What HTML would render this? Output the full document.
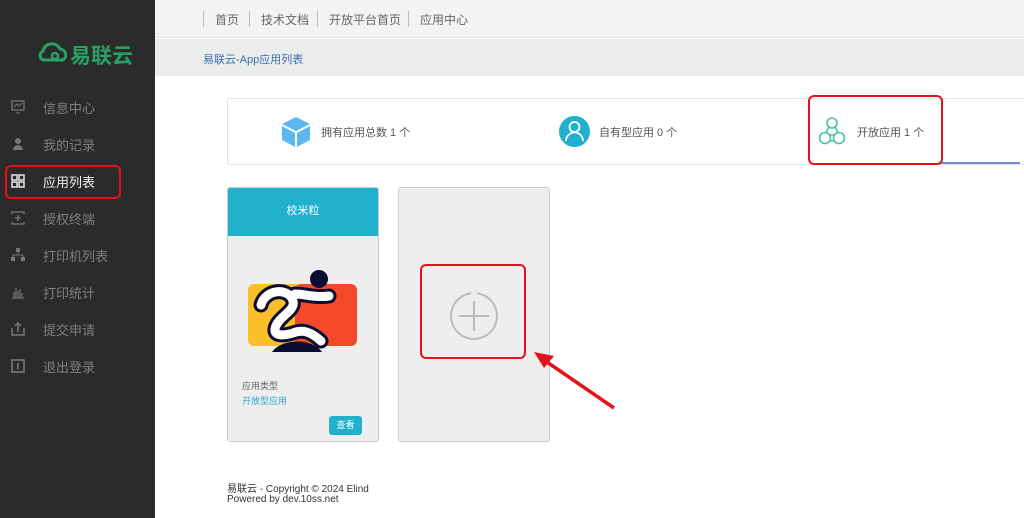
<!DOCTYPE html>
<html><head><meta charset="utf-8"><style>
*{margin:0;padding:0;box-sizing:border-box}
body{width:1024px;height:518px;overflow:hidden;background:#fff;font-family:"Liberation Sans","Noto Sans CJK SC",sans-serif;position:relative}
.abs{position:absolute}
#side{left:0;top:0;width:155px;height:518px;background:#2b2b2b}
.mi{position:absolute;left:43px;font-size:13px;color:#7f7f7f}
.ic{position:absolute;left:11px;width:14px;height:14px}
#top{left:155px;top:0;width:869px;height:38px;background:#f2f3f3;border-bottom:1px solid #e2e2e2}
#crumb{left:155px;top:39px;width:869px;height:37px;background:#ebecec}
.nav{position:absolute;top:11px;font-size:12px;color:#666}
.sep{position:absolute;top:11px;width:1px;height:16px;background:#bbb}
.red{position:absolute;border:2px solid #e5121b;border-radius:6px}
</style></head><body>
<div id="side" class="abs">
 <svg class="abs" style="left:37px;top:40px" width="30" height="24" viewBox="0 0 30 24"><path d="M6 20 A5 5 0 0 1 6 11 A9 9 0 0 1 23 9 A6 6 0 0 1 26 20 Z" fill="none" stroke="#27a263" stroke-width="3"/><circle cx="18" cy="16" r="3" fill="none" stroke="#27a263" stroke-width="2.5"/></svg>
 <div class="abs" style="left:70px;top:40px;font-size:21px;color:#27a263;font-weight:bold">易联云</div>
 <svg class="ic" style="top:100px" viewBox="0 0 14 14"><rect x="1" y="1" width="12" height="9" fill="none" stroke="#777" stroke-width="1.3"/><path d="M3 7l3-3 2 2 3-3M5 13h4" stroke="#777" fill="none"/></svg><div class="mi" style="top:98px">信息中心</div>
 <svg class="ic" style="top:137px" viewBox="0 0 14 14"><circle cx="7" cy="4" r="3" fill="#777"/><path d="M2 13a5 5 0 0 1 10 0z" fill="#777"/></svg><div class="mi" style="top:135px">我的记录</div>
 <svg class="ic" style="top:174px" viewBox="0 0 14 14"><g fill="none" stroke="#ddd" stroke-width="1.6"><rect x="1" y="1" width="5" height="5"/><rect x="8" y="1" width="5" height="5"/><rect x="1" y="8" width="5" height="5"/><rect x="8" y="8" width="5" height="5"/></g></svg><div class="mi" style="top:172px;color:#eee">应用列表</div>
 <svg class="ic" style="top:211px" viewBox="0 0 14 14"><path d="M1 3V1h12v2M1 11v2h12v-2M7 4v6M4 7h6" stroke="#777" fill="none" stroke-width="1.3"/></svg><div class="mi" style="top:209px">授权终端</div>
 <svg class="ic" style="top:248px" viewBox="0 0 14 14"><rect x="5" y="0" width="4" height="4" fill="#777"/><rect x="0" y="9" width="4" height="4" fill="#777"/><rect x="10" y="9" width="4" height="4" fill="#777"/><path d="M7 4v3M2 9V7h10v2" stroke="#777" fill="none"/></svg><div class="mi" style="top:246px">打印机列表</div>
 <svg class="ic" style="top:285px" viewBox="0 0 14 14"><path d="M1 13h12M3 12V7M5 12V3M7 12V6M9 12V4M11 12V8" stroke="#777" stroke-width="1.2"/></svg><div class="mi" style="top:283px">打印统计</div>
 <svg class="ic" style="top:322px" viewBox="0 0 14 14"><path d="M1 6v7h12V6M7 10V1M4 4l3-3 3 3" stroke="#777" fill="none" stroke-width="1.5"/></svg><div class="mi" style="top:320px">提交申请</div>
 <svg class="ic" style="top:359px" viewBox="0 0 14 14"><rect x="1" y="1" width="12" height="12" fill="none" stroke="#777" stroke-width="1.6"/><path d="M7 4v6" stroke="#777" stroke-width="1.6"/></svg><div class="mi" style="top:357px">退出登录</div>
</div>
<div class="red" style="left:5px;top:165px;width:116px;height:34px"></div>
<div id="top" class="abs">
 <div class="sep" style="left:48px"></div><div class="nav" style="left:60px">首页</div>
 <div class="sep" style="left:94px"></div><div class="nav" style="left:106px">技术文档</div>
 <div class="sep" style="left:162px"></div><div class="nav" style="left:174px">开放平台首页</div>
 <div class="sep" style="left:253px"></div><div class="nav" style="left:265px">应用中心</div>
</div>
<div id="crumb" class="abs"><div class="abs" style="left:48px;top:12px;font-size:11px;color:#3b6fb5">易联云-App应用列表</div></div>

<div class="abs" style="left:227px;top:98px;width:800px;height:67px;border:1px solid #e3e3e3;border-radius:2px"></div>
<div class="abs" style="left:940px;top:162px;width:80px;height:2px;background:#6f8fd0"></div>
<svg class="abs" style="left:280px;top:116px" width="32" height="32" viewBox="0 0 32 32"><path d="M16 1L30 8 16 15 2 8Z" fill="#5db8ef"/><path d="M2 10l13 7v14L2 24Z" fill="#5db8ef"/><path d="M30 10l-13 7v14l13-7Z" fill="#5db8ef"/></svg>
<div class="abs" style="left:321px;top:124px;font-size:11px;color:#555">拥有应用总数 1 个</div>
<svg class="abs" style="left:559px;top:116px" width="31" height="31" viewBox="0 0 31 31"><circle cx="15.5" cy="15.5" r="15.5" fill="#21b0cd"/><circle cx="15.5" cy="11" r="5" fill="none" stroke="#fff" stroke-width="1.8"/><path d="M7 25a8.5 8.5 0 0 1 17 0" fill="none" stroke="#fff" stroke-width="1.8"/></svg>
<div class="abs" style="left:599px;top:124px;font-size:11px;color:#555">自有型应用 0 个</div>
<svg class="abs" style="left:816px;top:116px" width="32" height="30" viewBox="0 0 32 30"><g fill="none" stroke="#4cc49a" stroke-width="1.6"><circle cx="16" cy="7" r="5"/><circle cx="9" cy="22" r="5.5"/><circle cx="23" cy="22" r="5.5"/><path d="M13 11l-3 6M19 11l3 6M13 19h6M13 25h6"/></g></svg>
<div class="abs" style="left:857px;top:124px;font-size:11px;color:#555">开放应用 1 个</div>
<div class="red" style="left:808px;top:95px;width:135px;height:70px"></div>

<div class="abs" style="left:227px;top:187px;width:152px;height:255px;background:#eeeeee;border:1px solid #ccc;border-radius:3px;overflow:hidden">
 <div style="height:48px;background:#22b1cd;color:#fff;font-size:11px;text-align:center;line-height:46px">校米粒</div>
 <svg class="abs" style="left:19px;top:82px" width="112" height="82" viewBox="0 0 112 82"><rect x="1" y="14" width="55" height="62" rx="6" fill="#fbbf2a"/><rect x="48" y="14" width="62" height="62" rx="6" fill="#f3482a"/><path d="M25 82c10-14 40-14 50 0z" fill="#0c0d33"/><circle cx="72" cy="9" r="9" fill="#0c0d33"/><path d="M14 35c4-16 28-18 32-4 3 10-16 16-18 28-1 7 8 7 18 4 10-4 18-1 28 8M48 24c10 0 20 4 34 2" fill="none" stroke="#0c0d33" stroke-width="15" stroke-linecap="round"/><path d="M14 35c4-16 28-18 32-4 3 10-16 16-18 28-1 7 8 7 18 4 10-4 18-1 28 8M48 24c10 0 20 4 34 2" fill="none" stroke="#fff" stroke-width="9" stroke-linecap="round"/></svg>
 <div class="abs" style="left:14px;top:191px;font-size:9px;color:#666">应用类型</div>
 <div class="abs" style="left:14px;top:206px;font-size:9px;color:#2aa6cc">开放型应用</div>
 <div class="abs" style="left:101px;top:228px;width:33px;height:19px;background:#22b1cd;border-radius:3px;color:#fff;font-size:9px;text-align:center;line-height:19px">查看</div>
</div>
<div class="abs" style="left:398px;top:187px;width:152px;height:255px;background:#eeeeee;border:1px solid #ccc;border-radius:3px"></div>
<svg class="abs" style="left:449px;top:291px" width="50" height="50" viewBox="0 0 50 50"><path d="M28 2.2A23 23 0 1 1 22 2.2" fill="none" stroke="#bbb" stroke-width="2"/><path d="M25 10v30M10 25h30" stroke="#bbb" stroke-width="2"/></svg>
<div class="red" style="left:420px;top:264px;width:106px;height:95px"></div>
<svg class="abs" style="left:528px;top:348px" width="92" height="64" viewBox="0 0 92 64"><path d="M86 60L16 12" stroke="#e5121b" stroke-width="3.5"/><path d="M6 4l20 4-10 12z" fill="#e5121b"/></svg>

<div class="abs" style="left:227px;top:480px;font-size:10px;color:#333">易联云 - Copyright © 2024 Elind</div>
<div class="abs" style="left:227px;top:494px;font-size:10px;color:#333">Powered by dev.10ss.net</div>
</body></html>
